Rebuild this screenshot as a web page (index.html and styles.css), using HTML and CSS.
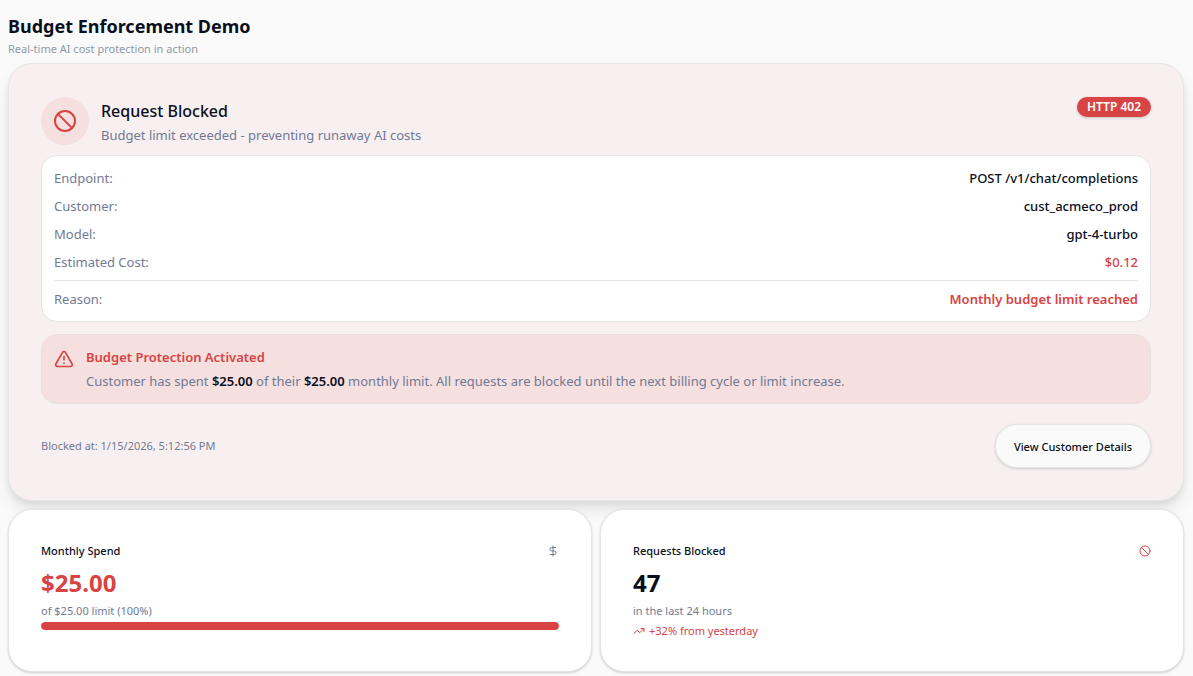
FILE: index.html
```
<!DOCTYPE html>
<html lang="en">
<head>
    <meta charset="UTF-8">
    <meta name="viewport" content="width=device-width, initial-scale=1.0">
    <title>Budget Enforcement Demo</title>
    <link rel="stylesheet" href="styles.css">
</head>
<body>
    <header class="page-header">
        <h1>Budget Enforcement Demo</h1>
        <p>Real-time AI cost protection in action</p>
    </header>

    <main>
        <section class="card blocked-card">
            <div class="blocked-header">
                <div class="blocked-icon">
                    <svg class="icon" width="24" height="24" viewBox="0 0 24 24"><circle cx="12" cy="12" r="10"/><path d="m4.9 4.9 14.2 14.2"/></svg>
                </div>
                <div class="blocked-heading">
                    <h2>Request Blocked</h2>
                    <p>Budget limit exceeded - preventing runaway AI costs</p>
                </div>
                <span class="badge">HTTP 402</span>
            </div>

            <dl class="details">
                <div class="detail-row">
                    <dt>Endpoint:</dt>
                    <dd>POST /v1/chat/completions</dd>
                </div>
                <div class="detail-row">
                    <dt>Customer:</dt>
                    <dd>cust_acmeco_prod</dd>
                </div>
                <div class="detail-row">
                    <dt>Model:</dt>
                    <dd>gpt-4-turbo</dd>
                </div>
                <div class="detail-row">
                    <dt>Estimated Cost:</dt>
                    <dd class="danger">$0.12</dd>
                </div>
                <div class="detail-row reason">
                    <dt>Reason:</dt>
                    <dd class="danger">Monthly budget limit reached</dd>
                </div>
            </dl>

            <div class="alert">
                <svg class="icon" width="20" height="20" viewBox="0 0 24 24"><path d="m21.73 18-8-14a2 2 0 0 0-3.48 0l-8 14A2 2 0 0 0 4 21h16a2 2 0 0 0 1.73-3"/><path d="M12 9v4"/><path d="M12 17h.01"/></svg>
                <div>
                    <h3>Budget Protection Activated</h3>
                    <p>Customer has spent <strong>$25.00</strong> of their <strong>$25.00</strong> monthly limit. All requests are blocked until the next billing cycle or limit increase.</p>
                </div>
            </div>

            <div class="blocked-footer">
                <span>Blocked at: 1/15/2026, 5:12:56 PM</span>
                <button type="button">View Customer Details</button>
            </div>
        </section>

        <div class="stats">
            <section class="card stat">
                <div class="stat-header">
                    <h3>Monthly Spend</h3>
                    <svg class="icon muted" width="12" height="12" viewBox="0 0 24 24"><path d="M12 2v20"/><path d="M17 5H9.5a3.5 3.5 0 0 0 0 7h5a3.5 3.5 0 0 1 0 7H6"/></svg>
                </div>
                <div class="stat-value danger">$25.00</div>
                <p>of $25.00 limit (100%)</p>
                <div class="progress">
                    <div class="progress-bar" style="width: 100%"></div>
                </div>
            </section>

            <section class="card stat">
                <div class="stat-header">
                    <h3>Requests Blocked</h3>
                    <svg class="icon danger" width="12" height="12" viewBox="0 0 24 24"><circle cx="12" cy="12" r="10"/><path d="m4.9 4.9 14.2 14.2"/></svg>
                </div>
                <div class="stat-value">47</div>
                <p>in the last 24 hours</p>
                <div class="trend danger">
                    <svg class="icon" width="12" height="12" viewBox="0 0 24 24"><path d="M22 7 13.5 15.5 8.5 10.5 2 17"/><path d="M16 7h6v6"/></svg>
                    <span>+32% from yesterday</span>
                </div>
            </section>
        </div>
    </main>
</body>
</html>
```

FILE: styles.css
```
* {
    box-sizing: border-box;
}
body {
    font-family: "Segoe UI", "Noto Sans", sans-serif;
    font-size: 13px;
    line-height: 20px;
    margin: 0;
    padding: 12px 9px 5px 8px;
    background-color: #fafafa;
    color: #0a0f1e;
}
h1, h2, h3, p, dl, dd {
    margin: 0;
}
.icon {
    flex-shrink: 0;
    fill: none;
    stroke: currentColor;
    stroke-width: 2;
    stroke-linecap: round;
    stroke-linejoin: round;
}
.danger {
    color: #d84343;
}
.muted {
    color: #717a94;
}
.page-header {
    margin-bottom: 6px;
}
.page-header h1 {
    font-size: 18px;
    line-height: 28px;
    font-weight: 700;
}
.page-header p {
    font-size: 11px;
    line-height: 17px;
    color: #8e99a8;
}
.card {
    background-color: #fff;
    border: 1px solid #e5e5e5;
    border-radius: 24px;
    padding: 32px;
    box-shadow: 0 1px 3px rgba(0,0,0,0.1), 0 1px 2px rgba(0,0,0,0.1);
}
.blocked-card {
    padding-top: 33px;
    background-color: #f8eff0;
    box-shadow: 0 10px 15px rgba(0,0,0,0.08), 0 4px 6px rgba(0,0,0,0.06);
}
.blocked-header {
    display: flex;
    align-items: flex-start;
    gap: 12px;
    margin-bottom: 10px;
}
.blocked-icon {
    display: flex;
    align-items: center;
    justify-content: center;
    width: 48px;
    height: 48px;
    border-radius: 50%;
    background-color: #f5dfdf;
    color: #d84343;
}
.blocked-heading {
    flex: 1;
}
.blocked-heading h2 {
    font-size: 16px;
    line-height: 28px;
    font-weight: 500;
}
.blocked-heading p {
    color: #717a94;
}
.badge {
    background-color: #d84343;
    color: #fff;
    font-size: 12px;
    line-height: 20px;
    font-weight: 600;
    padding: 0 10px;
    border-radius: 10px;
    box-shadow: 0 1px 3px rgba(0,0,0,0.2);
}
.details {
    display: flex;
    flex-direction: column;
    gap: 8px;
    background-color: #fff;
    border: 1px solid #e5e5e5;
    border-radius: 16px;
    padding: 12px;
}
.detail-row {
    display: flex;
    justify-content: space-between;
}
.detail-row dt {
    color: #717a94;
}
.detail-row dd {
    font-weight: 500;
}
.reason {
    border-top: 1px solid #e5e5e5;
    padding-top: 8px;
}
.reason dd {
    font-weight: 600;
}
.alert {
    display: flex;
    gap: 12px;
    margin-top: 12px;
    padding: 12px;
    background-color: #f5dfdf;
    border: 1px solid #e9e1e1;
    border-radius: 16px;
    color: #717a94;
}
.alert .icon {
    margin-top: 2px;
    color: #d84343;
}
.alert h3 {
    margin-bottom: 4px;
    font-size: 13px;
    font-weight: 600;
    color: #d84343;
}
.alert strong {
    font-weight: 600;
    color: #0a0f1e;
}
.blocked-footer {
    display: flex;
    align-items: center;
    justify-content: space-between;
    margin-top: 20px;
    font-size: 11px;
    color: #717a94;
}
.blocked-footer button {
    height: 44px;
    padding: 0 18px;
    font-family: inherit;
    font-size: 11px;
    font-weight: 500;
    color: #0a0f1e;
    background-color: #fafafa;
    border: 1px solid #e5e5e5;
    border-radius: 22px;
    box-shadow: 0 1px 3px rgba(0,0,0,0.15);
    cursor: pointer;
}
.stats {
    display: grid;
    grid-template-columns: 1fr 1fr;
    gap: 8px;
    margin-top: 8px;
}
.stat {
    font-size: 11px;
    line-height: 17px;
}
.stat-header {
    display: flex;
    align-items: center;
    justify-content: space-between;
    margin-bottom: 8px;
}
.stat-header h3 {
    font-size: 11px;
    line-height: 17px;
    font-weight: 500;
}
.stat-value {
    margin-bottom: 3px;
    font-size: 24px;
    line-height: 32px;
    font-weight: 700;
}
.stat p {
    color: #717a94;
}
.progress {
    height: 8px;
    margin-top: 3px;
    border-radius: 4px;
    background-color: #f5dfdf;
    overflow: hidden;
}
.progress-bar {
    height: 100%;
    border-radius: 4px;
    background-color: #d84343;
}
.trend {
    display: flex;
    align-items: center;
    gap: 4px;
    margin-top: 3px;
}
```
